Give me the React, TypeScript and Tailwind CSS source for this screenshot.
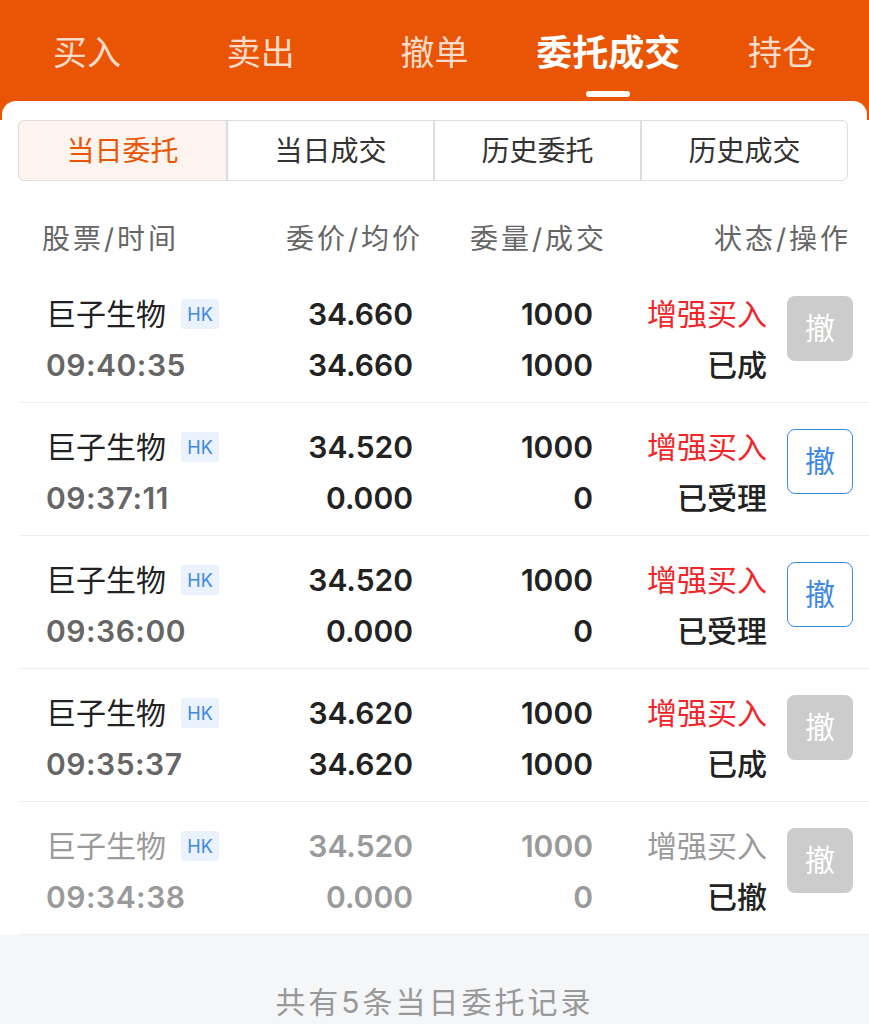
import React from "react";

const FONT = { fontFamily: '"PingFang SC", Inter, "Noto Sans CJK SC", sans-serif' };

const TABS = ["买入", "卖出", "撤单", "委托成交", "持仓"];
const SEGMENTS = ["当日委托", "当日成交", "历史委托", "历史成交"];

type Order = {
  time: string;
  price: string;
  avg: string;
  qty: string;
  filled: string;
  status: string;
  canCancel: boolean;
  cancelled?: boolean;
};

const ORDERS: Order[] = [
  { time: "09:40:35", price: "34.660", avg: "34.660", qty: "1000", filled: "1000", status: "已成", canCancel: false },
  { time: "09:37:11", price: "34.520", avg: "0.000", qty: "1000", filled: "0", status: "已受理", canCancel: true },
  { time: "09:36:00", price: "34.520", avg: "0.000", qty: "1000", filled: "0", status: "已受理", canCancel: true },
  { time: "09:35:37", price: "34.620", avg: "34.620", qty: "1000", filled: "1000", status: "已成", canCancel: false },
  { time: "09:34:38", price: "34.520", avg: "0.000", qty: "1000", filled: "0", status: "已撤", canCancel: false, cancelled: true },
];

function OrderRow({ o }: { o: Order }) {
  const main = o.cancelled ? "text-[#9a9a9a]" : "text-[#222]";
  const sub = o.cancelled ? "text-[#9a9a9a]" : "text-[#666]";
  return (
    <div className="ml-[20px] flex h-[133px] items-start border-b border-[#eeeeee] pl-[26px] pt-[24px]">
      <div className="flex w-[214px] flex-col gap-[11px]">
        <div className="flex h-[40px] items-center">
          <span className={`text-[30px] leading-[40px] ${main}`}>巨子生物</span>
          <span className="ml-[15px] flex h-[30px] w-[38px] items-center justify-center rounded-[3px] bg-[#eaf2fd] text-[18px] text-[#3d88e0]">
            HK
          </span>
        </div>
        <div className={`h-[40px] text-[30px] font-semibold leading-[40px] tracking-[0.5px] ${sub}`}>{o.time}</div>
      </div>
      <div className={`flex w-[153px] flex-col items-end gap-[11px] text-[30px] font-semibold leading-[40px] ${main}`}>
        <div className="h-[40px]">{o.price}</div>
        <div className="h-[40px]">{o.avg}</div>
      </div>
      <div className={`flex w-[180px] flex-col items-end gap-[11px] text-[30px] font-semibold leading-[40px] ${main}`}>
        <div className="h-[40px]">{o.qty}</div>
        <div className="h-[40px]">{o.filled}</div>
      </div>
      <div className="flex w-[174px] flex-col items-end gap-[11px] text-[30px] leading-[40px]">
        <div className={`h-[40px] ${o.cancelled ? "text-[#9a9a9a]" : "text-[#f0262a]"}`}>增强买入</div>
        <div className="h-[40px] font-medium text-[#222]">{o.status}</div>
      </div>
      <div className="ml-[20px] mt-[2px]">
        {o.canCancel ? (
          <button className="flex h-[65px] w-[66px] items-center justify-center rounded-[8px] border border-[#3d88e0] bg-white text-[30px] text-[#3d88e0]">
            撤
          </button>
        ) : (
          <button className="flex h-[65px] w-[66px] items-center justify-center rounded-[8px] bg-[#cccccc] text-[30px] text-white">
            撤
          </button>
        )}
      </div>
    </div>
  );
}

export default function App() {
  return (
    <div className="h-[1024px] w-[869px] overflow-hidden bg-white" style={FONT}>
      {/* orange header with top tabs and the rounded cap of the card */}
      <div className="bg-[#e95504]">
        <div className="grid h-[101px] grid-cols-5">
          {TABS.map((t, i) => (
            <div key={t} className="flex flex-col items-center">
              <div
                className={
                  i === 3
                    ? "mt-[31px] h-[44px] text-[36px] font-semibold leading-[44px] text-white"
                    : "mt-[31px] h-[44px] text-[34px] leading-[44px] text-[#fbdccb]"
                }
              >
                {t}
              </div>
              {i === 3 && <div className="mt-[16px] h-[6px] w-[44px] rounded-full bg-white" />}
            </div>
          ))}
        </div>
        <div className="mx-[2px] h-[19px] rounded-t-[14px] bg-white" />
      </div>

      {/* segmented control */}
      <div className="pl-[18px] pr-[21px]">
        <div className="grid h-[61px] grid-cols-4 overflow-hidden rounded-[6px] border border-[#dddddd]">
          {SEGMENTS.map((s, i) => (
            <div
              key={s}
              className={
                i === 0
                  ? "-m-[1px] flex items-center justify-center rounded-l-[6px] border border-[#f2ad8c] bg-[#fdf4ef] text-[28px] text-[#e95504]"
                  : "flex items-center justify-center border-l-[2px] border-[#dddddd] text-[28px] text-[#333]"
              }
            >
              {s}
            </div>
          ))}
        </div>
      </div>

      {/* column headers */}
      <div className="flex h-[89px] pl-[42px] pt-[38px] text-[28px] leading-[40px] tracking-[3px] text-[#666]">
        <div className="w-[200px]">股票/时间</div>
        <div className="w-[181px] text-right">委价/均价</div>
        <div className="w-[184px] text-right">委量/成交</div>
        <div className="w-[244px] text-right">状态/操作</div>
      </div>

      {ORDERS.map((o) => (
        <OrderRow key={o.time} o={o} />
      ))}

      <div className="h-[200px] bg-[#f5f6f8] pt-[47px] text-center text-[30px] leading-[40px] tracking-[3px] text-[#999]">
        共有5条当日委托记录
      </div>
    </div>
  );
}
